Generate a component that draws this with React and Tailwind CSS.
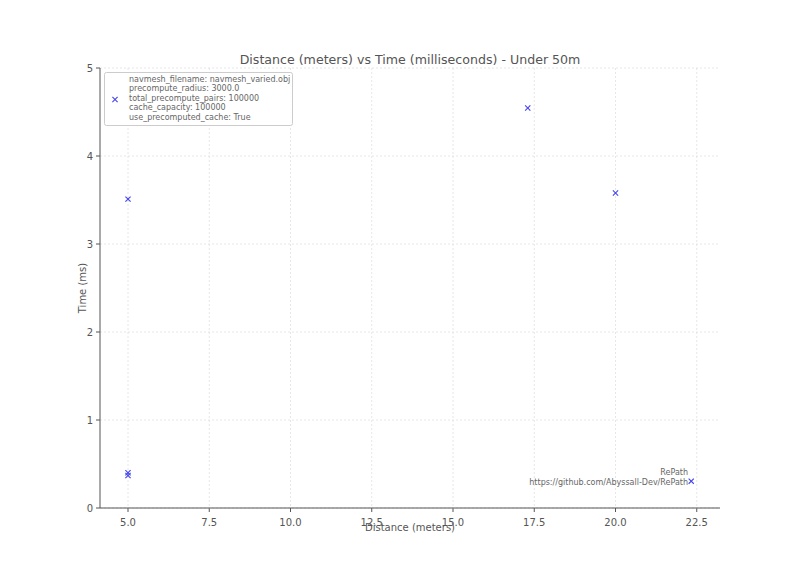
import React from 'react';

const X0 = 100, X1 = 720, Y0 = 68, Y1 = 508;
const px = (x) => 128 + (x - 5) * 32.5;
const py = (y) => 508 - y * 88;
const xticks = [5, 7.5, 10, 12.5, 15, 17.5, 20, 22.5];
const yticks = [0, 1, 2, 3, 4, 5];
const pts = [[5, 3.51], [17.3, 4.545], [20, 3.58], [5, 0.4], [5, 0.37], [22.33, 0.305]];
const legend = ['navmesh_filename: navmesh_varied.obj', 'precompute_radius: 3000.0', 'total_precompute_pairs: 100000', 'cache_capacity: 100000', 'use_precomputed_cache: True'];

const Cross = ({ x, y }) => (
  <g stroke="#4444ee" strokeWidth="1.1">
    <line x1={x - 2.6} y1={y - 2.6} x2={x + 2.6} y2={y + 2.6} />
    <line x1={x - 2.6} y1={y + 2.6} x2={x + 2.6} y2={y - 2.6} />
  </g>
);

export default function App() {
  return (
    <div className="w-[800px] h-[571px] bg-white flex font-['DejaVu_Sans',sans-serif]">
      <svg width="800" height="571" fontFamily='"DejaVu Sans", sans-serif'>
        {xticks.map((t) => (
          <g key={t}>
            <line x1={px(t)} x2={px(t)} y1={Y0} y2={Y1} stroke="#e0e0e0" strokeDasharray="2 2" strokeWidth="0.8" />
            <line x1={px(t)} x2={px(t)} y1={Y1} y2={Y1 + 4} stroke="#555" />
            <text x={px(t)} y={Y1 + 11} fontSize="10" fill="#555" textAnchor="middle" dominantBaseline="hanging">{t.toFixed(1)}</text>
          </g>
        ))}
        {yticks.map((t) => (
          <g key={t}>
            <line x1={X0} x2={X1} y1={py(t)} y2={py(t)} stroke="#e0e0e0" strokeDasharray="2 2" strokeWidth="0.8" />
            <line x1={X0 - 4} x2={X0} y1={py(t)} y2={py(t)} stroke="#555" />
            <text x={X0 - 7} y={py(t) + 4} fontSize="10" fill="#555" textAnchor="end">{t}</text>
          </g>
        ))}
        <line x1={X0} x2={X0} y1={Y0} y2={Y1} stroke="#555" />
        <line x1={X0} x2={X1} y1={Y1} y2={Y1} stroke="#555" />
        <text x="410" y="64" fontSize="12.6" fill="#555" textAnchor="middle">Distance (meters) vs Time (milliseconds) - Under 50m</text>
        <text x="410" y="531" fontSize="10" fill="#555" textAnchor="middle">Distance (meters)</text>
        <text x="86" y="288" fontSize="10" fill="#555" textAnchor="middle" transform="rotate(-90 86 288)">Time (ms)</text>
        {pts.map(([x, y], i) => <Cross key={i} x={px(x)} y={py(y)} />)}
        <rect x="104.5" y="72.5" width="188" height="53" rx="2" fill="white" fillOpacity="0.85" stroke="#ccc" />
        <Cross x={115} y={99.5} />
        {legend.map((l, i) => (
          <text key={i} x="129" y={81.5 + i * 9.6} fontSize="8" fill="#666">{l}</text>
        ))}
        <text x="688" y="475" fontSize="8" fill="#666" textAnchor="end">RePath</text>
        <text x="688" y="484.5" fontSize="8" fill="#666" textAnchor="end">https://github.com/Abyssall-Dev/RePath</text>
      </svg>
    </div>
  );
}
